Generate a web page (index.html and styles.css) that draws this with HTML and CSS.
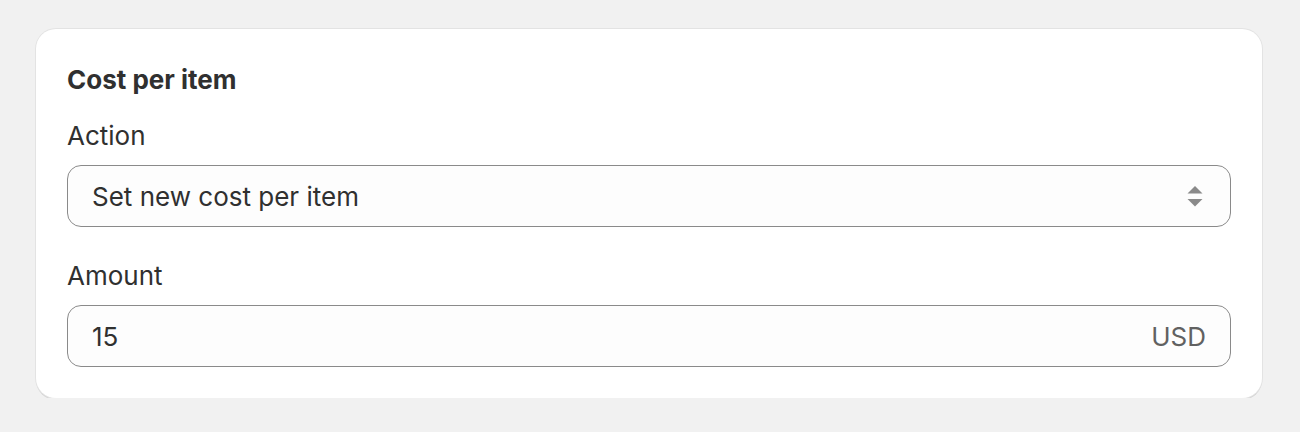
FILE: index.html
```html
<!DOCTYPE html>
<html lang="en">
<head>
    <meta charset="UTF-8">
    <title>Cost per item</title>
    <link rel="stylesheet" href="styles.css">
</head>
<body>
    <div class="card">
        <h2>Cost per item</h2>

        <!-- Action -->
        <div class="field">
            <label>Action</label>
            <div class="select">
                <span>Set new cost per item</span>
                <svg width="18" height="28" viewBox="0 0 18 28">
                    <path d="M9 4 L16.5 11.5 L1.5 11.5 Z" fill="#8a8a8a"/>
                    <path d="M1.5 17 L16.5 17 L9 24.5 Z" fill="#8a8a8a"/>
                </svg>
            </div>
        </div>

        <!-- Amount -->
        <div class="field">
            <label>Amount</label>
            <div class="input">
                <span>15</span>
                <span class="suffix">USD</span>
            </div>
        </div>
    </div>
</body>
</html>
```

FILE: styles.css
```css
body {
    margin: 0;
    padding: 29px 38px 0 36px;
    background-color: #f1f1f1;
    font-family: Inter, "Noto Sans", sans-serif;
    color: #303030;
}

.card {
    background-color: #fff;
    border-radius: 20px;
    box-shadow: 0 0 0 1px #e3e3e3, 0 2px 0 #d4d4d4;
    padding: 31px 31px 31px 31px;
}

.card h2 {
    margin: 0 0 18px;
    font-size: 26px;
    font-weight: 650;
    line-height: 40px;
}

.field {
    margin-bottom: 31px;
}

.field:last-child {
    margin-bottom: 0;
}

.field label {
    display: block;
    font-size: 26px;
    line-height: 36px;
    margin-bottom: 11px;
}

.select,
.input {
    display: flex;
    align-items: center;
    justify-content: space-between;
    height: 62px;
    box-sizing: border-box;
    padding: 0 24px;
    border: 1px solid #8a8a8a;
    border-radius: 14px;
    background-color: #fdfdfd;
    font-size: 26px;
}

.select svg {
    margin-right: 2px;
}

.suffix {
    color: #616161;
}
```
